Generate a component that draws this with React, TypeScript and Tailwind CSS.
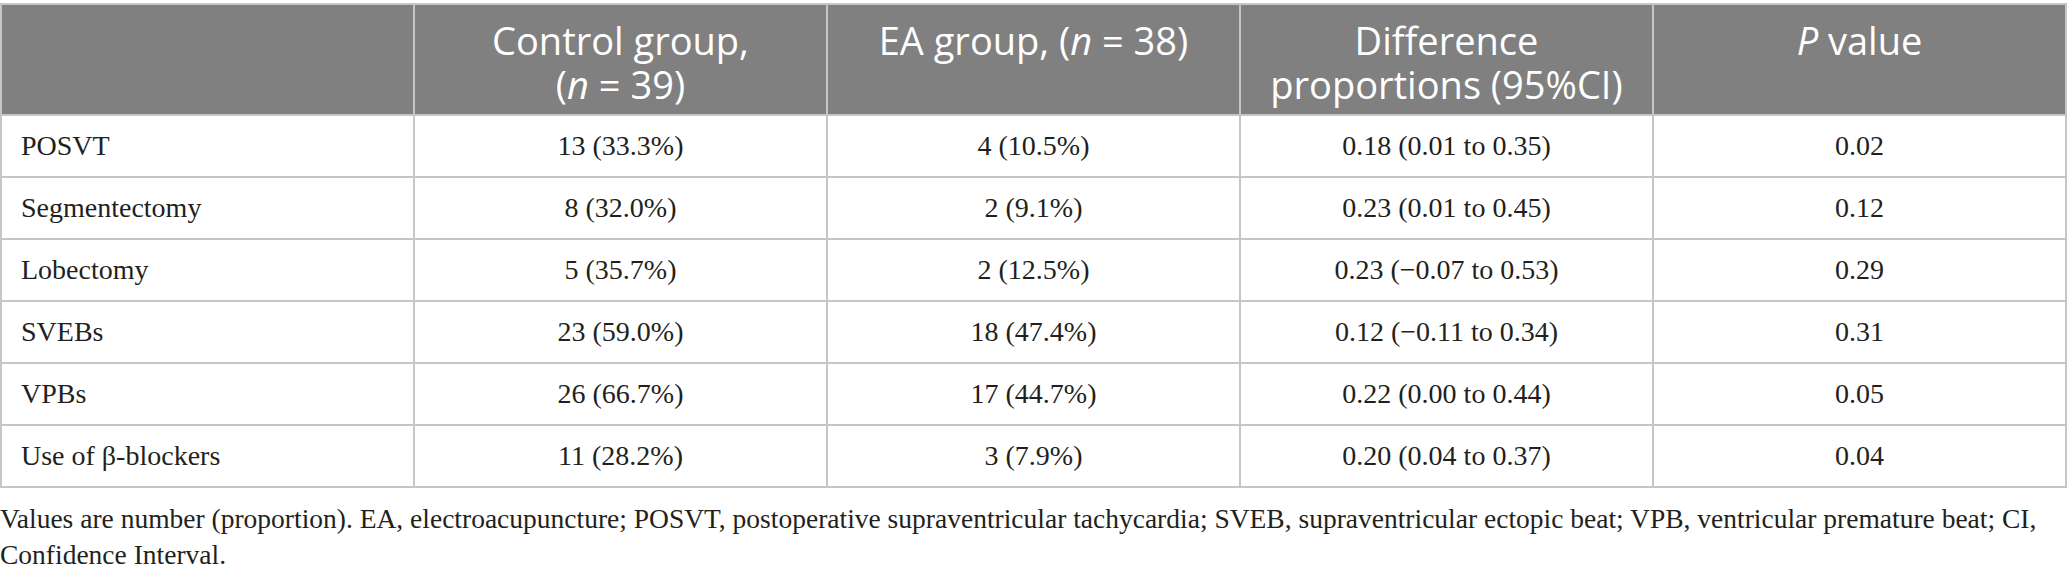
const rows = [
  ["POSVT", "13 (33.3%)", "4 (10.5%)", "0.18 (0.01 to 0.35)", "0.02"],
  ["Segmentectomy", "8 (32.0%)", "2 (9.1%)", "0.23 (0.01 to 0.45)", "0.12"],
  ["Lobectomy", "5 (35.7%)", "2 (12.5%)", "0.23 (\u22120.07 to 0.53)", "0.29"],
  ["SVEBs", "23 (59.0%)", "18 (47.4%)", "0.12 (\u22120.11 to 0.34)", "0.31"],
  ["VPBs", "26 (66.7%)", "17 (44.7%)", "0.22 (0.00 to 0.44)", "0.05"],
  ["Use of \u03b2-blockers", "11 (28.2%)", "3 (7.9%)", "0.20 (0.04 to 0.37)", "0.04"],
];

const th =
  "border-2 border-[#c6c6c6] px-4 pt-[13px] align-top text-center text-[38px] font-normal leading-[44px] font-['Open_Sans',sans-serif]";

export default function App() {
  return (
    <main className="min-h-screen w-full bg-white pt-[3px]">
      <table className="w-full table-fixed border-collapse">
        <thead>
          <tr className="h-[111px] bg-[#7f807f] text-white">
            <th className={th} />
            <th className={th}>
              Control group,
              <br />
              (<i>n</i> = 39)
            </th>
            <th className={th}>
              EA group, (<i>n</i> = 38)
            </th>
            <th className={th}>
              Difference
              <br />
              proportions (95%CI)
            </th>
            <th className={th}>
              <i>P</i> value
            </th>
          </tr>
        </thead>
        <tbody>
          {rows.map((r, i) => (
            <tr key={i} className="h-[62px]">
              {r.map((c, j) => (
                <td
                  key={j}
                  className={`border-2 border-[#c6c6c6] align-middle text-[28px] text-[#231f20] font-['Liberation_Serif',serif] ${
                    j === 0 ? "pl-[19px] text-left" : "text-center"
                  }`}
                >
                  {c}
                </td>
              ))}
            </tr>
          ))}
        </tbody>
      </table>
      <p className="mt-[13px] text-[27.5px] leading-[36px] text-[#231f20] font-['Liberation_Serif',serif]">
        Values are number (proportion). EA, electroacupuncture; POSVT, postoperative supraventricular tachycardia; SVEB,
        supraventricular ectopic beat; VPB, ventricular premature beat; CI, Confidence Interval.
      </p>
    </main>
  );
}
